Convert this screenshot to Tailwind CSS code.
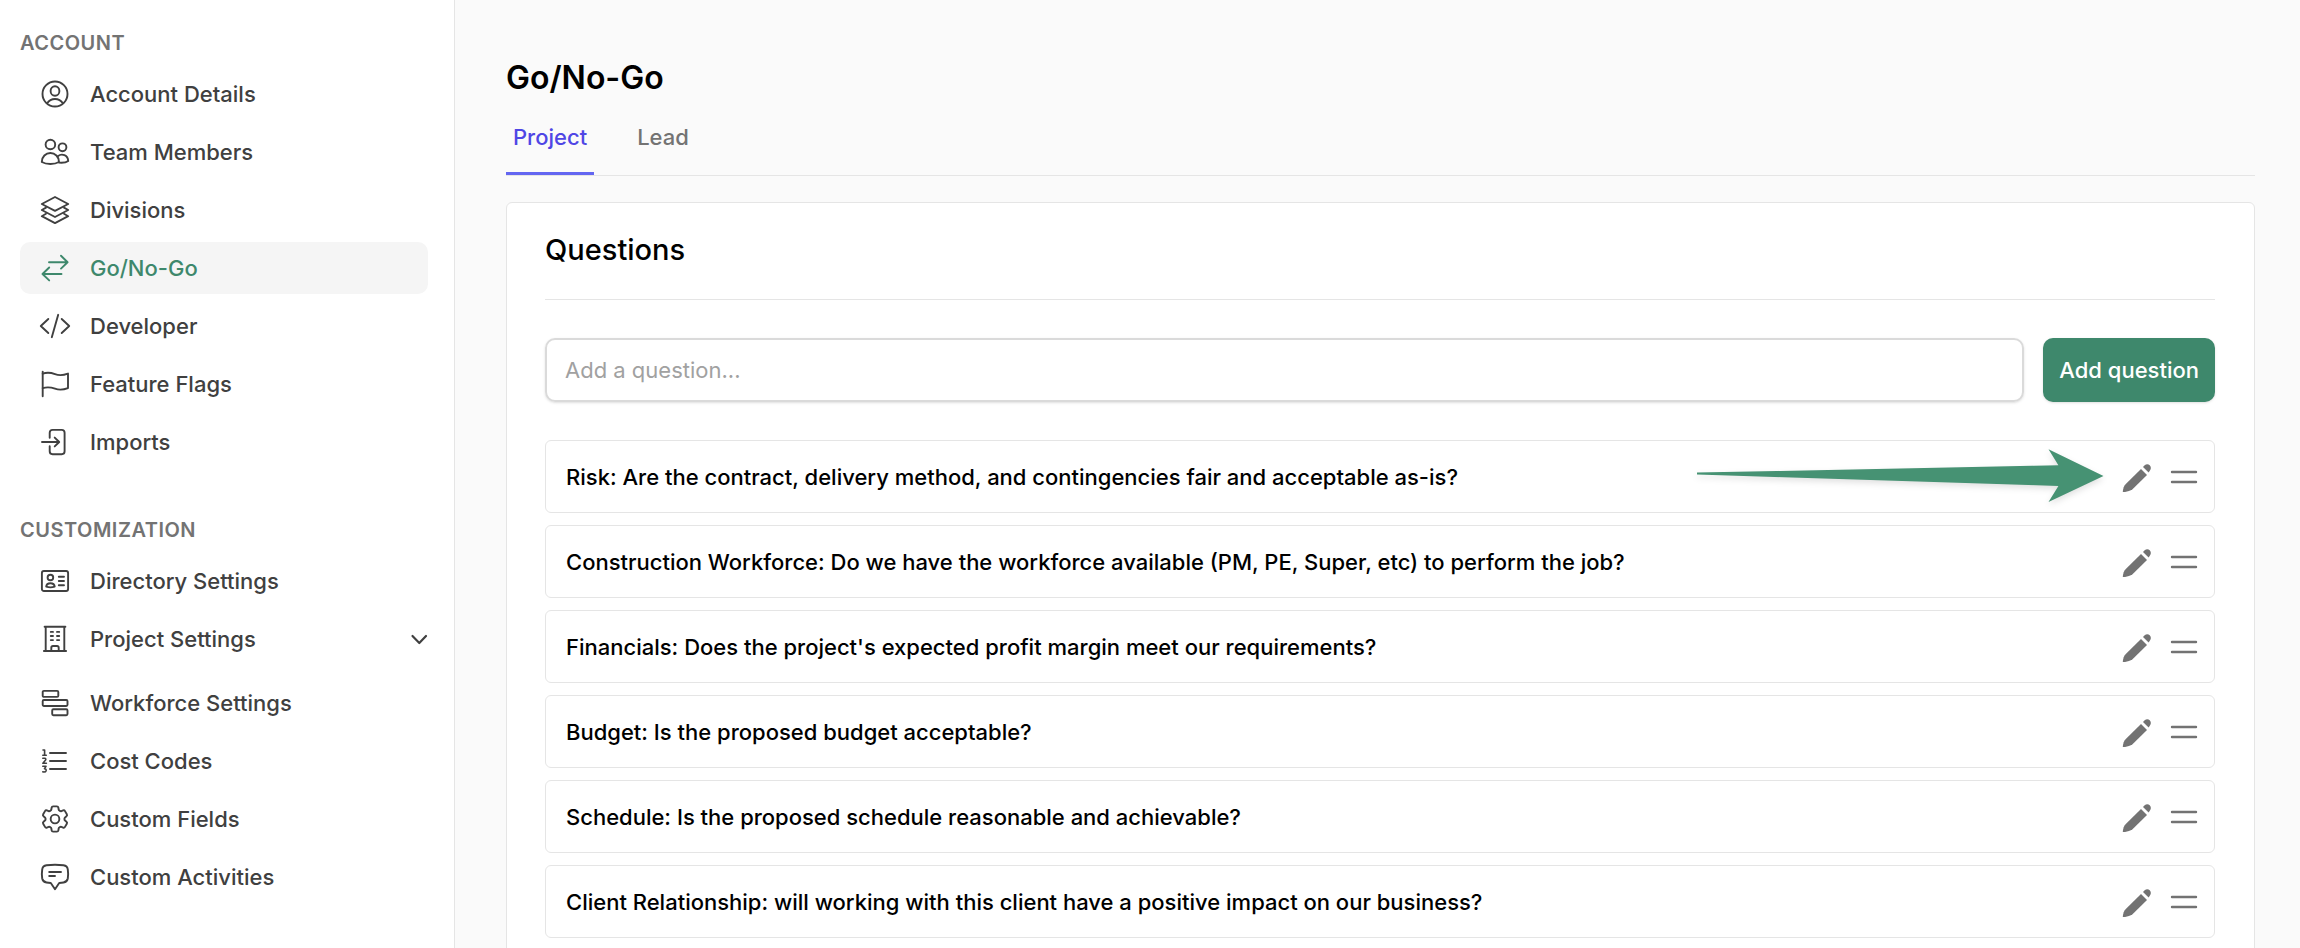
<!DOCTYPE html>
<html lang="en">
<head>
<meta charset="utf-8">
<meta name="viewport" content="width=device-width, initial-scale=1">
<title>Go/No-Go</title>
<script src="https://cdn.jsdelivr.net/npm/@tailwindcss/browser@4"></script>
</head>
<body class="bg-neutral-50 font-['Inter',sans-serif] text-[22px] leading-[34px] text-black">

<svg class="hidden" aria-hidden="true">
  <symbol id="pencil" viewBox="0 0 30 30">
    <path d="M19 7 25 13 10.500 27.300C8 29.200 4.500 29.800 1.800 30.200 1 30.300.700 29.900.800 29.200 1.200 26.500 1.800 24 3.800 22Z"/>
    <path d="M21 5 22.400 3.600C24.300 1.900 26.300 2 27.700 3.300 29.200 4.800 29.300 7 27.800 8.800L26.600 10.500Z"/>
  </symbol>
  <symbol id="handle" viewBox="0 0 28 28">
    <path d="M2 9H26M2 19H26" fill="none" stroke="currentColor" stroke-width="2.400" stroke-linecap="round"/>
  </symbol>
</svg>

<div class="flex h-screen">
  <aside class="w-[455px] shrink-0 border-r border-neutral-200 bg-white pt-[29px] pr-[26px] pl-5 font-medium text-neutral-700">
    <nav aria-label="Settings">
      <h2 class="mb-[11px] text-[20px] leading-7 font-semibold tracking-wide text-neutral-500">ACCOUNT</h2>
      <ul class="flex flex-col gap-1.5">
        <li><a href="#" class="flex h-[52px] items-center gap-[21px] rounded-[10px] px-[21px]">
          <svg class="size-7 overflow-visible" viewBox="0 0 28 28" fill="none" stroke="currentColor" stroke-width="1.900"><circle cx="14" cy="14" r="12.500"/><ellipse cx="14" cy="11" rx="4.400" ry="4.800"/><path d="M6 23.600C8 20.500 11 19 14 19S20 20.500 22 23.600"/></svg>
          <span>Account Details</span></a></li>
        <li><a href="#" class="flex h-[52px] items-center gap-[21px] rounded-[10px] px-[21px]">
          <svg class="size-7 overflow-visible" viewBox="0 0 28 28" fill="none" stroke="currentColor" stroke-width="1.900" stroke-linejoin="round" stroke-linecap="round"><circle cx="9.400" cy="6.500" r="4.800"/><circle cx="21.500" cy="9.300" r="3.900"/><path d="M.800 24C.800 18.700 4.800 15 9.400 15S18 18.700 18 24C13.500 26.700 5.300 26.700.800 24Z"/><path d="M16.800 18.200C20.800 15 27 17 27.200 23 25 24.600 21.500 24.900 18 24.600"/></svg>
          <span>Team Members</span></a></li>
        <li><a href="#" class="flex h-[52px] items-center gap-[21px] rounded-[10px] px-[21px]">
          <svg class="size-7 overflow-visible" viewBox="0 0 28 28" fill="none" stroke="currentColor" stroke-width="1.900" stroke-linejoin="round" stroke-linecap="round"><path d="M14 1 27.200 8 14 14.800.800 8Z"/><path d="M5 11.700.800 14 14 21 27.200 14 23 11.700"/><path d="M5 17.800.800 20.200 14 27.100 27.200 20.200 23 17.800"/></svg>
          <span>Divisions</span></a></li>
        <li><a href="#" aria-current="page" class="flex h-[52px] items-center gap-[21px] rounded-[10px] bg-neutral-100 px-[21px] text-[#3e886c]">
          <svg class="size-7 overflow-visible" viewBox="0 0 28 28" fill="none" stroke="currentColor" stroke-width="1.900" stroke-linejoin="round" stroke-linecap="round"><path d="M8 8.200H26.600M20 1.700 26.600 8.200 20 14.600"/><path d="M20.500 20H1.500M8.200 13.500 1.500 20 8.200 26.400"/></svg>
          <span>Go/No-Go</span></a></li>
        <li><a href="#" class="flex h-[52px] items-center gap-[21px] rounded-[10px] px-[21px]">
          <svg class="size-7 overflow-visible" viewBox="0 0 28 28" fill="none" stroke="currentColor" stroke-width="1.900" stroke-linejoin="round" stroke-linecap="round"><path d="M7.300 7-.200 14 7.300 21M20.700 7 28.200 14 20.700 21M17.200 2.800 10.800 25.200"/></svg>
          <span>Developer</span></a></li>
        <li><a href="#" class="flex h-[52px] items-center gap-[21px] rounded-[10px] px-[21px]">
          <svg class="size-7 overflow-visible" viewBox="0 0 28 28" fill="none" stroke="currentColor" stroke-width="1.900" stroke-linejoin="round" stroke-linecap="round"><path d="M1.700 1.700V26.200"/><path d="M1.700 3.700C6 2.200 9.500 2.500 14 4.200 18.500 5.800 22 5.500 27 3.600V18.100C22 20 18.500 20.300 14 18.700 9.500 17.100 6 16.800 1.700 18.200"/></svg>
          <span>Feature Flags</span></a></li>
        <li><a href="#" class="flex h-[52px] items-center gap-[21px] rounded-[10px] px-[21px]">
          <svg class="size-7 overflow-visible" viewBox="0 0 28 28" fill="none" stroke="currentColor" stroke-width="1.900" stroke-linejoin="round" stroke-linecap="round"><path d="M8.700 9.800V4.800Q8.700 1.900 11.600 1.900H20.700Q23.600 1.900 23.600 4.800V23.300Q23.600 26.200 20.700 26.200H11.600Q8.700 26.200 8.700 23.300V18.300"/><path d="M1 14H18M13.700 9.600 18.200 14 13.700 18.400"/></svg>
          <span>Imports</span></a></li>
      </ul>

      <h2 class="mt-12 mb-[11px] text-[20px] leading-7 font-semibold tracking-wide text-neutral-500">CUSTOMIZATION</h2>
      <ul class="flex flex-col gap-1.5">
        <li><a href="#" class="flex h-[52px] items-center gap-[21px] rounded-[10px] px-[21px]">
          <svg class="size-7 overflow-visible" viewBox="0 0 28 28" fill="none" stroke="currentColor" stroke-width="1.900" stroke-linejoin="round" stroke-linecap="round"><rect x=".900" y="4" width="26.200" height="20" rx="2"/><circle cx="9.400" cy="10.500" r="2.800"/><path d="M5.200 19.700C5.400 17.200 7.200 16.200 9.400 16.200S13.500 17.200 13.700 19.700C11 20.600 8 20.600 5.200 19.700Z"/><path d="M17.800 9.800H23M17.800 14H23M17.800 18.300H23"/></svg>
          <span>Directory Settings</span></a></li>
        <li class="mb-1.5"><button type="button" aria-expanded="false" class="flex h-[52px] w-full items-center gap-[21px] rounded-[10px] pl-[21px] text-left">
          <svg class="size-7 overflow-visible" viewBox="0 0 28 28" fill="none" stroke="currentColor" stroke-width="1.900" stroke-linecap="round"><path d="M3.600 1.800H24.400M4.700 1.800V26M23.300 1.800V26M2.900 26H25.100M10.300 26V22.800Q10.300 21 12 21H16Q17.700 21 17.700 22.800V26"/><path d="M9.800 6.900H12M16 6.900H18.200M9.800 11H12M16 11H18.200M9.800 15.100H12M16 15.100H18.200"/></svg>
          <span class="flex-1">Project Settings</span>
          <svg class="size-[18px]" viewBox="0 0 18 18" fill="none" stroke="currentColor" stroke-width="2.200" stroke-linejoin="round" stroke-linecap="round"><path d="M2.500 6 9.300 13 16 6"/></svg></button></li>
        <li><a href="#" class="flex h-[52px] items-center gap-[21px] rounded-[10px] px-[21px]">
          <svg class="size-7 overflow-visible" viewBox="0 0 28 28" fill="none" stroke="currentColor" stroke-width="1.900"><rect x="1.700" y="1.900" width="15.600" height="6" rx="1.200"/><rect x="1.700" y="11" width="24.800" height="6" rx="1.200"/><rect x="11.200" y="20.200" width="15.300" height="6" rx="1.200"/></svg>
          <span>Workforce Settings</span></a></li>
        <li><a href="#" class="flex h-[52px] items-center gap-[21px] rounded-[10px] px-[21px]">
          <svg class="size-7 overflow-visible" viewBox="0 0 28 28" fill="none" stroke="currentColor" stroke-width="1.900" stroke-linecap="round" stroke-linejoin="round"><path d="M9 6H25M9 14H25M9 22H25"/><path stroke-width="1.600" d="M2 3H3.600V8.200M1.800 8.200H5.300M1.800 11.300H4Q5.200 11.700 4.600 13L1.900 16.300H5.400M1.800 19.300H5L3.500 21.700Q5.400 21.800 5.100 23.700 4.600 25.400 1.800 24.800"/></svg>
          <span>Cost Codes</span></a></li>
        <li><a href="#" class="flex h-[52px] items-center gap-[21px] rounded-[10px] px-[21px]">
          <svg class="size-7 overflow-visible" viewBox="2 2 20 20" fill="none" stroke="currentColor" stroke-width="1.360" stroke-linejoin="round"><path d="M9.594 3.940c.090-.542.560-.940 1.110-.940h2.593c.550 0 1.020.398 1.110.940l.213 1.281c.063.374.313.686.645.870.074.040.147.083.220.127.325.196.720.257 1.075.124l1.217-.456a1.125 1.125 0 0 1 1.370.490l1.296 2.247a1.125 1.125 0 0 1-.260 1.431l-1.003.827c-.293.241-.438.613-.430.992a7.723 7.723 0 0 1 0 .255c-.008.378.137.750.430.991l1.004.827c.424.350.534.955.260 1.430l-1.298 2.247a1.125 1.125 0 0 1-1.369.491l-1.217-.456c-.355-.133-.750-.072-1.076.124a6.470 6.470 0 0 1-.220.128c-.331.183-.581.495-.644.869l-.213 1.281c-.090.543-.560.940-1.110.940h-2.594c-.550 0-1.019-.398-1.110-.940l-.213-1.281c-.062-.374-.312-.686-.644-.870a6.520 6.520 0 0 1-.220-.127c-.325-.196-.720-.257-1.076-.124l-1.217.456a1.125 1.125 0 0 1-1.369-.490l-1.297-2.247a1.125 1.125 0 0 1 .260-1.431l1.004-.827c.292-.240.437-.613.430-.991a6.932 6.932 0 0 1 0-.255c.007-.380-.138-.751-.430-.992l-1.004-.827a1.125 1.125 0 0 1-.260-1.430l1.297-2.247a1.125 1.125 0 0 1 1.370-.491l1.216.456c.356.133.751.072 1.076-.124.072-.044.146-.086.220-.128.332-.183.582-.495.644-.869l.214-1.280Z"/><circle cx="12" cy="12" r="3.100"/></svg>
          <span>Custom Fields</span></a></li>
        <li><a href="#" class="flex h-[52px] items-center gap-[21px] rounded-[10px] px-[21px]">
          <svg class="size-7 overflow-visible" viewBox="0 0 28 28" fill="none" stroke="currentColor" stroke-width="1.900" stroke-linejoin="round" stroke-linecap="round"><path d="M5.500 2.300Q14 1.300 22.500 2.300 26.300 2.900 26.800 6.500 27.500 11 26.800 15.500 26.200 18.800 22.500 19.500 20.500 19.900 18.200 20L14 26.200 9.800 20Q7.500 19.900 5.500 19.500 1.800 18.800 1.200 15.500.500 11 1.200 6.500 1.700 2.900 5.500 2.300Z"/><path d="M8.200 9H20M8.200 13H14"/></svg>
          <span>Custom Activities</span></a></li>
      </ul>
    </nav>
  </aside>

  <main class="min-w-0 flex-1 overflow-y-auto pt-[54px] pr-[45px] pl-[51px] [scrollbar-width:none]">
    <h1 class="text-[32px] leading-[48px] font-semibold">Go/No-Go</h1>
    <div role="tablist" class="mt-[18px] flex gap-9 border-b border-neutral-200 font-medium">
      <button type="button" role="tab" aria-selected="true" class="border-b-3 border-[#6366f1] px-[7px] pb-[18px] text-[#4f46e5]">Project</button>
      <button type="button" role="tab" aria-selected="false" class="border-b-3 border-transparent px-[7px] pb-[18px] text-neutral-500">Lead</button>
    </div>

    <section class="mt-[26px] rounded-md border border-neutral-200 bg-white pt-[27px] pr-[39px] pb-[38px] pl-[38px]">
      <h2 class="border-b border-neutral-200 pb-[29px] text-[29px] leading-10 font-medium">Questions</h2>

      <form class="mt-[38px] flex gap-[19px]">
        <input type="text" aria-label="Add a question" placeholder="Add a question..." class="h-16 min-w-0 flex-1 rounded-[10px] border-2 border-[#dadada] px-[18px] shadow-sm placeholder:text-neutral-400">
        <button type="button" class="h-16 rounded-[10px] bg-[#3e886c] px-4 font-medium whitespace-nowrap text-white shadow-sm">Add question</button>
      </form>

      <ul class="mt-[38px] flex flex-col gap-3 font-medium">
        <li class="relative flex h-[73px] items-center gap-[18px] rounded-md border border-neutral-200 pr-4 pl-5">
          <span class="flex-1">Risk: Are the contract, delivery method, and contingencies fair and acceptable as-is?</span>
          <svg class="pointer-events-none absolute top-0 right-[104px] h-[71px] w-[420px] overflow-visible drop-shadow-md" viewBox="0 0 420 71" fill="#469273" aria-hidden="true"><path d="M7 31.600 368.400 24.300 358.500 8.300 413.500 35 358.500 61 368.400 45 7 33.600Z"/></svg>
          <button type="button" aria-label="Edit question" class="text-neutral-500"><svg class="size-[30px] overflow-visible" fill="currentColor"><use href="#pencil"/></svg></button>
          <button type="button" aria-label="Reorder question" class="text-neutral-500"><svg class="size-7"><use href="#handle"/></svg></button>
        </li>
        <li class="flex h-[73px] items-center gap-[18px] rounded-md border border-neutral-200 pr-4 pl-5">
          <span class="flex-1">Construction Workforce: Do we have the workforce available (PM, PE, Super, etc) to perform the job?</span>
          <button type="button" aria-label="Edit question" class="text-neutral-500"><svg class="size-[30px] overflow-visible" fill="currentColor"><use href="#pencil"/></svg></button>
          <button type="button" aria-label="Reorder question" class="text-neutral-500"><svg class="size-7"><use href="#handle"/></svg></button>
        </li>
        <li class="flex h-[73px] items-center gap-[18px] rounded-md border border-neutral-200 pr-4 pl-5">
          <span class="flex-1">Financials: Does the project's expected profit margin meet our requirements?</span>
          <button type="button" aria-label="Edit question" class="text-neutral-500"><svg class="size-[30px] overflow-visible" fill="currentColor"><use href="#pencil"/></svg></button>
          <button type="button" aria-label="Reorder question" class="text-neutral-500"><svg class="size-7"><use href="#handle"/></svg></button>
        </li>
        <li class="flex h-[73px] items-center gap-[18px] rounded-md border border-neutral-200 pr-4 pl-5">
          <span class="flex-1">Budget: Is the proposed budget acceptable?</span>
          <button type="button" aria-label="Edit question" class="text-neutral-500"><svg class="size-[30px] overflow-visible" fill="currentColor"><use href="#pencil"/></svg></button>
          <button type="button" aria-label="Reorder question" class="text-neutral-500"><svg class="size-7"><use href="#handle"/></svg></button>
        </li>
        <li class="flex h-[73px] items-center gap-[18px] rounded-md border border-neutral-200 pr-4 pl-5">
          <span class="flex-1">Schedule: Is the proposed schedule reasonable and achievable?</span>
          <button type="button" aria-label="Edit question" class="text-neutral-500"><svg class="size-[30px] overflow-visible" fill="currentColor"><use href="#pencil"/></svg></button>
          <button type="button" aria-label="Reorder question" class="text-neutral-500"><svg class="size-7"><use href="#handle"/></svg></button>
        </li>
        <li class="flex h-[73px] items-center gap-[18px] rounded-md border border-neutral-200 pr-4 pl-5">
          <span class="flex-1">Client Relationship: will working with this client have a positive impact on our business?</span>
          <button type="button" aria-label="Edit question" class="text-neutral-500"><svg class="size-[30px] overflow-visible" fill="currentColor"><use href="#pencil"/></svg></button>
          <button type="button" aria-label="Reorder question" class="text-neutral-500"><svg class="size-7"><use href="#handle"/></svg></button>
        </li>
      </ul>
    </section>
  </main>
</div>
</body>
</html>
